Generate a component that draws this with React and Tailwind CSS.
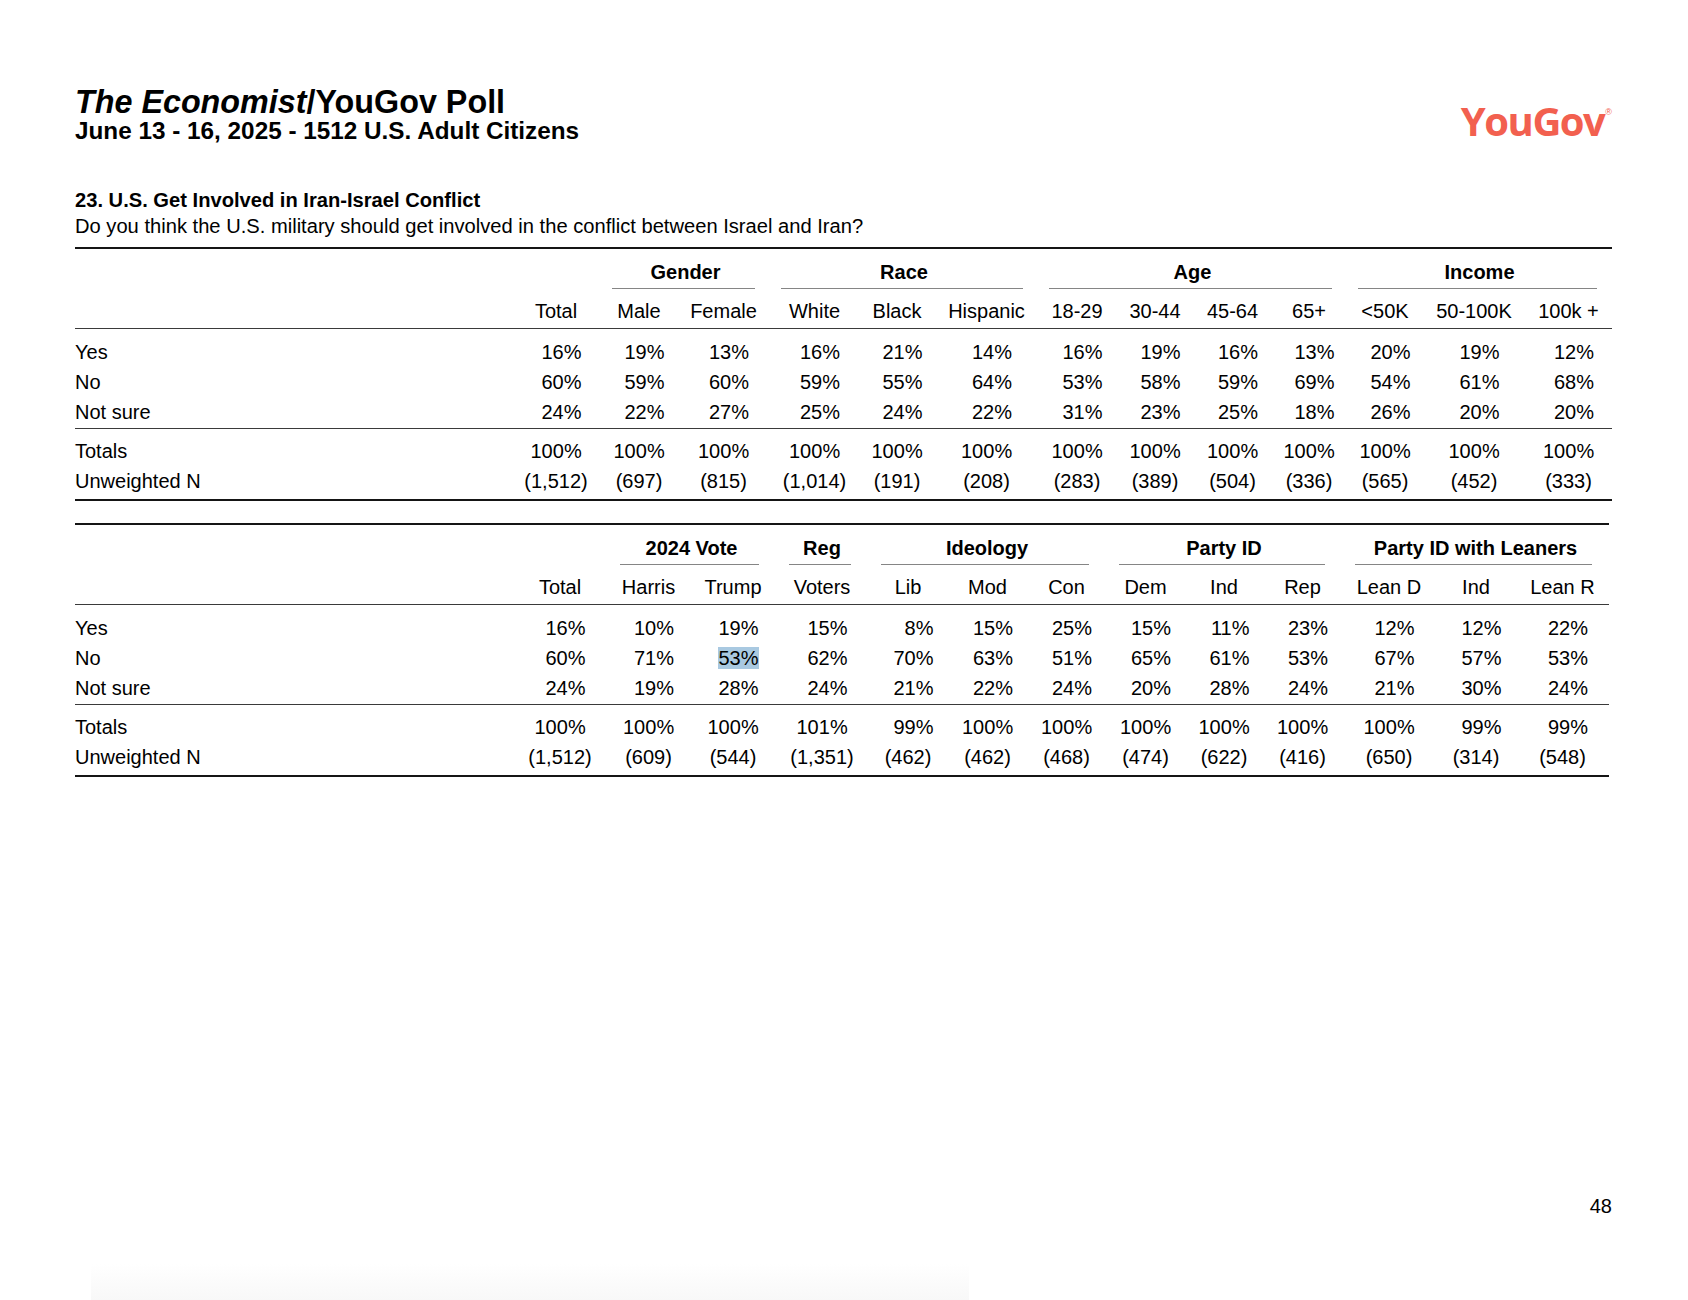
import React from "react";

const SPAN = { 1: "col-span-1", 2: "col-span-2", 3: "col-span-3", 4: "col-span-4" };

const T1 = {
  grid: "grid grid-cols-[436px_90px_76px_93px_89px_76px_103px_78px_78px_77px_76px_76px_102px_87px]",
  width: "w-[1537px]",
  trim: "ml-[11px] mr-[15px]",
  groups: [
    { label: "Gender", span: 2 },
    { label: "Race", span: 3 },
    { label: "Age", span: 4 },
    { label: "Income", span: 3 },
  ],
  cols: ["Total", "Male", "Female", "White", "Black", "Hispanic", "18-29", "30-44", "45-64", "65+", "<50K", "50-100K", "100k +"],
  rows: [
    ["Yes", [16, 19, 13, 16, 21, 14, 16, 19, 16, 13, 20, 19, 12]],
    ["No", [60, 59, 60, 59, 55, 64, 53, 58, 59, 69, 54, 61, 68]],
    ["Not sure", [24, 22, 27, 25, 24, 22, 31, 23, 25, 18, 26, 20, 20]],
  ],
  totals: [100, 100, 100, 100, 100, 100, 100, 100, 100, 100, 100, 100, 100],
  n: ["(1,512)", "(697)", "(815)", "(1,014)", "(191)", "(208)", "(283)", "(389)", "(504)", "(336)", "(565)", "(452)", "(333)"],
  hl: null,
};

const T2 = {
  grid: "grid grid-cols-[438px_94px_83px_86px_92px_80px_79px_79px_79px_78px_79px_94px_80px_93px]",
  width: "w-[1534px]",
  trim: "ml-[13px] mr-[17px]",
  groups: [
    { label: "2024 Vote", span: 2 },
    { label: "Reg", span: 1 },
    { label: "Ideology", span: 3 },
    { label: "Party ID", span: 3 },
    { label: "Party ID with Leaners", span: 3 },
  ],
  cols: ["Total", "Harris", "Trump", "Voters", "Lib", "Mod", "Con", "Dem", "Ind", "Rep", "Lean D", "Ind", "Lean R"],
  rows: [
    ["Yes", [16, 10, 19, 15, 8, 15, 25, 15, 11, 23, 12, 12, 22]],
    ["No", [60, 71, 53, 62, 70, 63, 51, 65, 61, 53, 67, 57, 53]],
    ["Not sure", [24, 19, 28, 24, 21, 22, 24, 20, 28, 24, 21, 30, 24]],
  ],
  totals: [100, 100, 100, 101, 99, 100, 100, 100, 100, 100, 100, 99, 99],
  n: ["(1,512)", "(609)", "(544)", "(1,351)", "(462)", "(462)", "(468)", "(474)", "(622)", "(416)", "(650)", "(314)", "(548)"],
  hl: [1, 2],
};

function Pct({ v, hl }) {
  return (
    <div className="text-center">
      <span className="inline-block w-[51px] text-right">
        {hl ? <span className="bg-[#a9c9e1]">{v}%</span> : <>{v}%</>}
      </span>
    </div>
  );
}

function PollTable({ t, className = "" }) {
  return (
    <div className={`${t.width} ${className}`}>
      <div className="h-[2px] bg-[#151515]" />
      <div className={`${t.grid} h-[40px]`}>
        <div />
        <div />
        {t.groups.map((g) => (
          <div key={g.label} className={`${SPAN[g.span]} flex flex-col`}>
            <div className="pt-[11px] text-center font-bold leading-[24px] whitespace-nowrap">{g.label}</div>
            <div className={`mt-auto h-px bg-[#858585] ${t.trim}`} />
          </div>
        ))}
      </div>
      <div className={`${t.grid} h-[39px] pt-[10px] leading-[24px]`}>
        <div />
        {t.cols.map((c, i) => (
          <div key={i} className="text-center whitespace-nowrap">
            {c}
          </div>
        ))}
      </div>
      <div className="h-px bg-[#3a3a3a]" />
      <div className="pt-[8px] pb-[1px]">
        {t.rows.map(([label, vals], ri) => (
          <div key={label} className={`${t.grid} h-[30px] leading-[30px]`}>
            <div className="whitespace-nowrap">{label}</div>
            {vals.map((v, ci) => (
              <Pct key={ci} v={v} hl={t.hl && t.hl[0] === ri && t.hl[1] === ci} />
            ))}
          </div>
        ))}
      </div>
      <div className="h-px bg-[#3a3a3a]" />
      <div className="pt-[7px] pb-[3px]">
        <div className={`${t.grid} h-[30px] leading-[30px]`}>
          <div>Totals</div>
          {t.totals.map((v, ci) => (
            <Pct key={ci} v={v} />
          ))}
        </div>
        <div className={`${t.grid} h-[30px] leading-[30px]`}>
          <div className="whitespace-nowrap">Unweighted N</div>
          {t.n.map((v, ci) => (
            <div key={ci} className="text-center whitespace-nowrap">
              {v}
            </div>
          ))}
        </div>
      </div>
      <div className="h-[2px] bg-[#151515]" />
    </div>
  );
}

export default function App() {
  return (
    <div className="w-[1688px] h-[1300px] bg-white text-black pl-[75px] pt-[85px] flex flex-col overflow-hidden font-['Liberation_Sans',Arial,Helvetica,sans-serif] text-[20px]">
      <div className="w-[1537px] flex justify-between items-start">
        <div>
          <div className="text-[32.3px] leading-[34px] font-bold whitespace-nowrap">
            <i>The Economist</i>/YouGov Poll
          </div>
          <div className="text-[24.3px] leading-[24px] font-bold whitespace-nowrap">
            June 13 - 16, 2025 - 1512 U.S. Adult Citizens
          </div>
        </div>
        <div className="mt-[15px] flex items-start text-[#f2604f]">
          <span className="font-['Open_Sans',Arial,sans-serif] text-[40px] leading-[41px] font-bold tracking-[-1.5px]">
            YouGov
          </span>
          <span className="text-[9px] leading-none mt-[8px] ml-[1px]">®</span>
        </div>
      </div>

      <div className="mt-[44px] leading-[26px] text-[20.15px]">
        <div className="font-bold">23. U.S. Get Involved in Iran-Israel Conflict</div>
        <div>Do you think the U.S. military should get involved in the conflict between Israel and Iran?</div>
      </div>

      <PollTable t={T1} className="mt-[8px]" />
      <PollTable t={T2} className="mt-[22px]" />

      <div className="w-[1537px] mt-[417px] text-right leading-[24px]">48</div>

      <div className="mt-auto ml-[16px] w-[878px] h-[36px] bg-linear-to-b from-white to-[#f8f8f8]" />
    </div>
  );
}
